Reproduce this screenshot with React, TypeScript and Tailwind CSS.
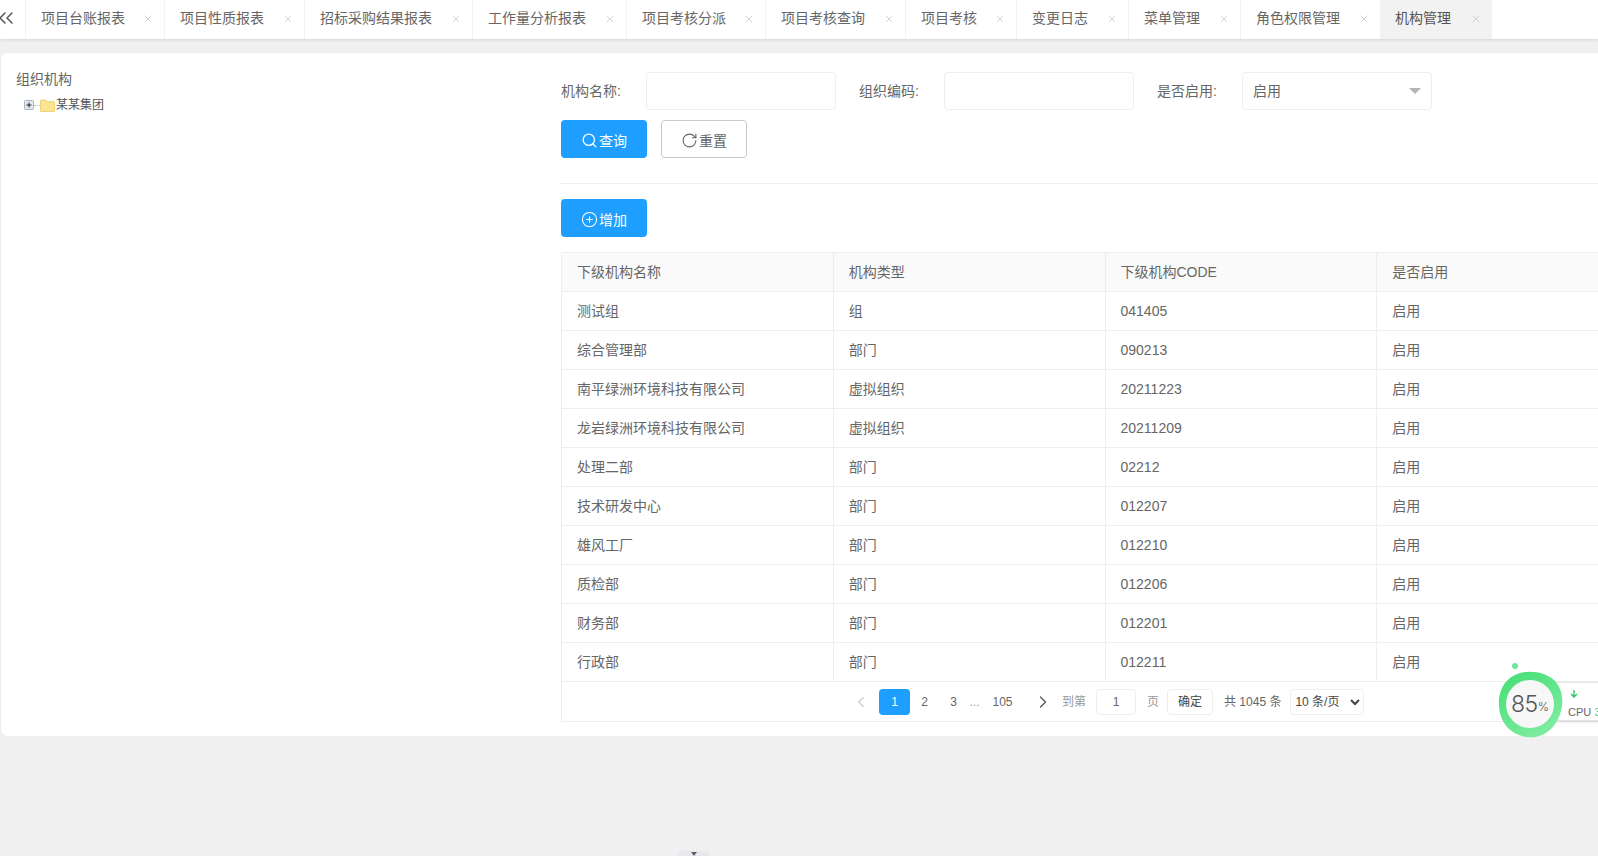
import { ChevronLeft, ChevronRight, ChevronsLeft, CirclePlus, RotateCw, Search, X } from 'lucide-react';

const tabs = [
  { name: '项目台账报表', width: 139 },
  { name: '项目性质报表', width: 140 },
  { name: '招标采购结果报表', width: 168 },
  { name: '工作量分析报表', width: 154 },
  { name: '项目考核分派', width: 139 },
  { name: '项目考核查询', width: 140 },
  { name: '项目考核', width: 111 },
  { name: '变更日志', width: 112 },
  { name: '菜单管理', width: 112 },
  { name: '角色权限管理', width: 140 },
  { name: '机构管理', width: 112, active: true },
];

const rows = [
  ['测试组', '组', '041405', '启用'],
  ['综合管理部', '部门', '090213', '启用'],
  ['南平绿洲环境科技有限公司', '虚拟组织', '20211223', '启用'],
  ['龙岩绿洲环境科技有限公司', '虚拟组织', '20211209', '启用'],
  ['处理二部', '部门', '02212', '启用'],
  ['技术研发中心', '部门', '012207', '启用'],
  ['雄风工厂', '部门', '012210', '启用'],
  ['质检部', '部门', '012206', '启用'],
  ['财务部', '部门', '012201', '启用'],
  ['行政部', '部门', '012211', '启用'],
];

const columns = ['下级机构名称', '机构类型', '下级机构CODE', '是否启用'];

function TabBar() {
  return (
    <div className="flex h-[39px] shrink-0 bg-white shadow-[0_1px_3px_rgba(0,0,0,0.12)] relative">
      <div className="w-[25px] shrink-0 flex items-center">
        <ChevronsLeft className="h-[24px] w-[24px] -ml-[6px] mb-[3px] text-[#555]" strokeWidth={1.5} />
      </div>
      {tabs.map((tab) => (
        <div
          key={tab.name}
          style={{ width: tab.width }}
          className={`shrink-0 flex items-center justify-between pl-[15px] pr-[10px] pb-[3px] border-l border-[#f2f2f2] text-sm ${
            tab.active ? 'bg-[#f2f2f2] text-[#555] border-l-0' : 'text-[#666]'
          }`}
        >
          <span>{tab.name}</span>
          <X className="h-3 w-3 text-[#c4c4c4] mt-[2px]" strokeWidth={1.5} />
        </div>
      ))}
    </div>
  );
}

function TreePanel() {
  return (
    <div className="w-[560px] shrink-0 pl-[15px] pt-[16px]">
      <div className="text-sm leading-[20px] text-[#666]">组织机构</div>
      <div className="flex items-center h-4 mt-[8px] pl-[8px] text-xs text-[#555]">
        <svg width="10" height="10" viewBox="0 0 10 10">
          <rect x="0.5" y="0.5" width="9" height="9" rx="1" fill="#e3e8ee" stroke="#a9b4c0" />
          <path d="M2.5 5h5M5 2.5v5" stroke="#222" strokeWidth="1" />
        </svg>
        <span className="w-[6px] border-t border-dotted border-[#bbb]" />
        <svg width="15" height="13" viewBox="0 0 15 13" className="mr-px">
          <path d="M0.5 2a1 1 0 0 1 1-1h4l1.5 1.7h6.5a1 1 0 0 1 1 1V12a.6.6 0 0 1-.6.6H1a.6.6 0 0 1-.5-.6z" fill="#fbe58f" stroke="#ecd07a" />
        </svg>
        <span>某某集团</span>
      </div>
    </div>
  );
}

function Field({ label, children, className }: { label: string; children: React.ReactNode; className?: string }) {
  return (
    <div className={`flex items-center ${className ?? ''}`}>
      <span className="w-[85px] text-sm text-[#666]">{label}</span>
      {children}
    </div>
  );
}

function SearchForm() {
  return (
    <>
      <div className="flex">
        <Field label="机构名称:">
          <input className="w-[190px] h-[38px] border border-[#eee] rounded-sm bg-white" />
        </Field>
        <Field label="组织编码:" className="ml-[23px]">
          <input className="w-[190px] h-[38px] border border-[#eee] rounded-sm bg-white" />
        </Field>
        <Field label="是否启用:" className="ml-[23px]">
          <div className="w-[190px] h-[38px] border border-[#eee] rounded-sm flex items-center justify-between pl-[10px] pr-[10px] text-sm text-[#666]">
            <span>启用</span>
            <span className="w-0 h-0 border-x-[6px] border-x-transparent border-t-[6px] border-t-[#b5b5b5]" />
          </div>
        </Field>
      </div>
      <div className="flex gap-[14px] mt-[10px]">
        <button className="w-[86px] h-[38px] pt-[3px] rounded-sm bg-[#1e9fff] text-white text-sm flex items-center justify-center">
          <Search className="h-[17px] w-[17px]" strokeWidth={1.8} />
          <span className="ml-px">查询</span>
        </button>
        <button className="w-[86px] h-[38px] pt-[3px] rounded-sm border border-[#c9c9c9] bg-white text-[#666] text-sm flex items-center justify-center">
          <RotateCw className="h-[17px] w-[17px]" strokeWidth={1.5} />
          <span className="ml-px">重置</span>
        </button>
      </div>
      <div className="mt-[25px] border-t border-[#eee]" />
      <button className="mt-[15px] w-[86px] h-[38px] pt-[3px] rounded-sm bg-[#1e9fff] text-white text-sm flex items-center justify-center">
        <CirclePlus className="h-[17px] w-[17px]" strokeWidth={1.5} />
        <span className="ml-px">增加</span>
      </button>
    </>
  );
}

function DataTable() {
  return (
    <table className="mt-[15px] w-[1088px] table-fixed border-collapse text-sm text-[#666]">
      <thead>
        <tr className="h-[39px] bg-[#fafafa]">
          {columns.map((col) => (
            <th key={col} className="border border-[#eee] pl-[15px] text-left font-normal">
              {col}
            </th>
          ))}
        </tr>
      </thead>
      <tbody>
        {rows.map((row) => (
          <tr key={row[0]} className="h-[39px]">
            {row.map((cell, i) => (
              <td key={i} className="border border-[#eee] pl-[15px]">
                {cell}
              </td>
            ))}
          </tr>
        ))}
      </tbody>
    </table>
  );
}

function Pagination() {
  return (
    <div className="w-[1088px] h-[40px] border border-t-0 border-[#eee] flex items-center pl-[290px] text-xs text-[#666]">
      <ChevronLeft className="h-[18px] w-[18px] text-[#c9c9c9]" strokeWidth={1.5} />
      <span className="ml-[9px] w-[31px] h-[26px] rounded-sm bg-[#1e9fff] text-white flex items-center justify-center">1</span>
      <span className="w-[29px] text-center">2</span>
      <span className="w-[29px] text-center">3</span>
      <span className="w-[13px] text-center text-[#999]">...</span>
      <span className="w-[43px] text-center">105</span>
      <ChevronRight className="ml-[9px] h-[20px] w-[20px] text-[#555]" strokeWidth={1.5} />
      <span className="ml-[9px] text-[#999]">到第</span>
      <span className="ml-[10px] w-[40px] h-[26px] border border-[#eee] rounded-sm flex items-center justify-center">1</span>
      <span className="ml-[11px] text-[#999]">页</span>
      <span className="ml-[8px] w-[46px] h-[26px] border border-[#eee] rounded-sm flex items-center justify-center text-[#444]">确定</span>
      <span className="ml-[11px]">共 1045 条</span>
      <select className="ml-[9px] w-[74px] h-[26px] border border-[#eee] rounded-sm bg-white text-xs text-[#444]">
        <option>10 条/页</option>
      </select>
    </div>
  );
}

function Widget() {
  return (
    <>
      <div className="absolute left-[1553px] top-[682px] w-[60px] h-[39px] bg-white border border-[#e6e6e6] rounded-l-md shadow-sm text-[11px] text-[#666] pl-[14px]">
        <svg width="10" height="10" viewBox="0 0 10 10" className="mt-[6px] ml-px">
          <path d="M5 1v7M2 5l3 3 3-3" fill="none" stroke="#22c55e" strokeWidth="1.3" />
        </svg>
        <div className="mt-[8px] leading-none whitespace-nowrap">
          CPU <span className="text-[#3ddc84]">3</span>
        </div>
      </div>
      <div className="absolute left-[1512px] top-[663px] w-[6px] h-[6px] rounded-full bg-[#6fe39a]" />
      <div className="absolute left-[1498px] top-[671px] w-[66px] h-[67px]">
        <svg width="66" height="67" viewBox="0 0 66 67" className="absolute inset-0 blur-[0.6px]">
          <defs>
            <linearGradient id="blob" x1="0" y1="0" x2="0.6" y2="1">
              <stop offset="0" stopColor="#43de74" />
              <stop offset="1" stopColor="#7deb9f" />
            </linearGradient>
          </defs>
          <path d="M22 2c12-3 27 0 35 8 7 8 9 19 6 30-3 12-12 24-26 26C23 68 9 60 4 48-2 34-1 9 22 2z" fill="url(#blob)" />
        </svg>
        <div className="absolute left-[8px] top-[9px] w-[48px] h-[48px] rounded-full bg-[#f7f7f7] flex items-center justify-center text-[#555] font-['Inter',sans-serif] font-light">
          <span className="text-[23px] leading-none tracking-tight">85</span>
          <span className="text-[12px] leading-none mt-[6px]">%</span>
        </div>
      </div>
      <div className="absolute left-[678px] top-[851px] w-[32px] h-[5px] rounded-t-lg bg-[#e8e9ee] flex justify-center">
        <span className="mt-px w-0 h-0 border-x-[3px] border-x-transparent border-t-[4px] border-t-[#5f6368]" />
      </div>
    </>
  );
}

export default function App() {
  return (
    <div className="relative h-[856px] w-[1598px] overflow-hidden bg-[#f0f0f0] flex flex-col font-['Liberation_Sans','Noto_Sans_CJK_SC',sans-serif]">
      <TabBar />
      <div className="mt-[14px] ml-px flex w-[1700px] h-[683px] bg-white rounded-md shadow-[0_0_2px_rgba(0,0,0,0.06)]">
        <TreePanel />
        <div className="w-[1090px] shrink-0 pt-[19px]">
          <SearchForm />
          <DataTable />
          <Pagination />
        </div>
      </div>
      <Widget />
    </div>
  );
}
